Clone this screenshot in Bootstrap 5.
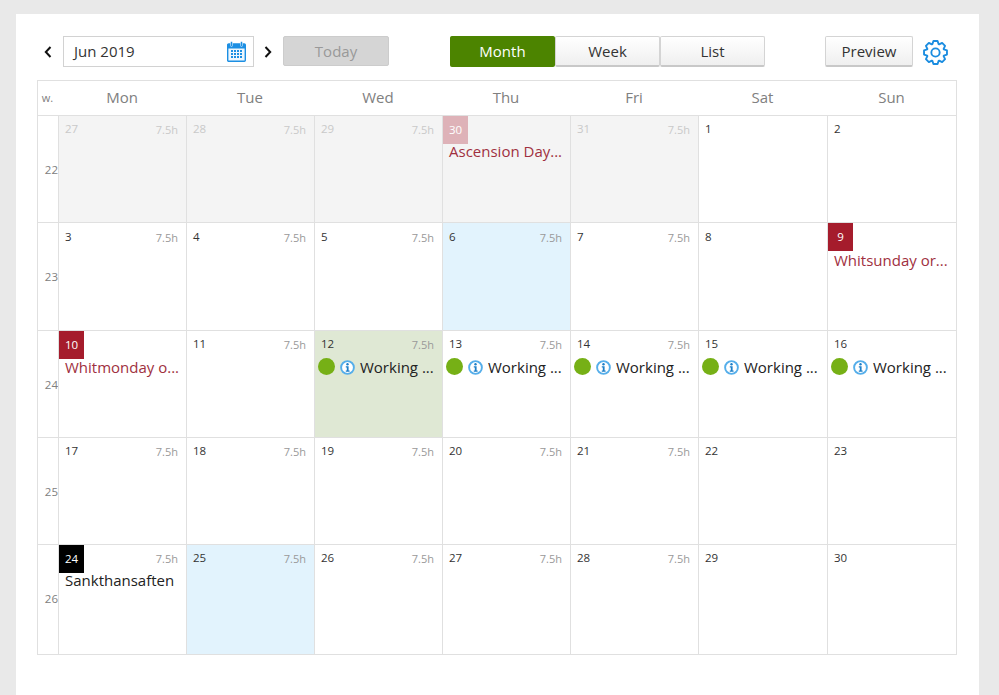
<!DOCTYPE html>
<html lang="en">
<head>
    <meta charset="UTF-8">
    <meta name="viewport" content="width=device-width, initial-scale=1.0">
    <title>Calendar</title>
    <link rel="stylesheet" href="https://cdn.jsdelivr.net/npm/bootstrap@5.3.0/dist/css/bootstrap.min.css">
    <style>
        body {
            font-family: "Open Sans", "Liberation Sans", sans-serif;
            background-color: #e9e9e9;
            color: #333;
            height: 695px;
            overflow: hidden;
        }

        .page-panel {
            background: #fff;
            margin: 14px 20px 0 16px;
            padding: 22px 22px 0 21px;
            height: 681px;
        }

        /* Toolbar */
        .tool-bar { height: 31px; margin-bottom: 13px; }

        .arrow-btn { width: 26px; height: 31px; }
        .arrow-prev { padding-right: 4px; }
        .arrow-next { padding-left: 2px; }

        .date-box {
            width: 191px;
            height: 31px;
            border: 1px solid #d2d2d2;
            padding: 0 7px 0 10px;
            font-size: 15px;
            color: #333;
        }

        .today-btn {
            width: 106px;
            height: 30px;
            margin-left: 3px;
            background: #d5d5d5;
            border: 1px solid #ccc;
            border-radius: 2px;
            color: #999;
            font-size: 15px;
            line-height: 28px;
            text-align: center;
        }

        .view-group { margin-left: 61px; }

        .view-btn {
            width: 105px;
            height: 31px;
            border: 1px solid #d4d4d4;
            border-bottom: 2px solid #c8c8c8;
            background: linear-gradient(#fff, #efefef);
            color: #333;
            font-size: 15px;
            line-height: 28px;
            text-align: center;
            border-radius: 2px;
            padding: 0;
        }

        .view-btn.is-active {
            background: #4c8400;
            border-color: #4c8400;
            color: #fff;
        }

        .preview-btn { width: 88px; margin-left: 60px; }

        .gear-icon { margin: 4px 0 0 10px; }

        /* Calendar grid */
        .cal-grid {
            display: grid;
            grid-template-columns: 20px repeat(5, 128px) 129px 129px;
            grid-template-rows: 35px 107px 108px 107px 107px 109px;
            border: 1px solid #e0e0e0;
            width: 920px;
        }

        .head-cell {
            font-size: 15px;
            color: #808080;
            text-align: center;
            line-height: 33px;
            border-bottom: 1px solid #e0e0e0;
        }

        .head-week { font-size: 11px; line-height: 34px; padding-right: 1px; }

        .week-cell {
            font-size: 11.5px;
            color: #808080;
            text-align: right;
            border-bottom: 1px solid #e0e0e0;
            padding-top: 45px;
        }

        .day-cell {
            border-left: 1px solid #e0e0e0;
            border-bottom: 1px solid #e0e0e0;
            min-width: 0;
            white-space: nowrap;
            overflow: hidden;
        }

        .day-cell.last-row, .week-cell.last-row { border-bottom: 0; }

        .day-head { height: 28px; padding: 5px 8px 0 6px; }

        .day-head.is-lower { padding-top: 6px; }

        .day-num { font-size: 11.5px; line-height: 16px; color: #333; }

        .day-hours { font-size: 11px; line-height: 18px; color: #999; }

        .day-head.has-badge { padding-left: 0; padding-top: 0; }

        .day-head.has-badge .day-hours { margin-top: 5px; }

        .day-badge {
            width: 25px;
            height: 28px;
            color: #fff;
            font-size: 11.5px;
            line-height: 28px;
            text-align: center;
        }

        .badge-red { background: #a51c2c; }
        .badge-black { background: #000; }
        .badge-pale { background: #deb2b8; }

        .day-event {
            font-size: 15px;
            line-height: 20px;
            padding-left: 6px;
            margin-top: -3px;
        }

        .day-event.is-lower { margin-top: -2px; }
        .day-event.is-lowest { margin-top: -1px; }

        .event-red { color: #a03040; }
        .event-black { color: #222; }

        .work-row { padding-left: 3px; margin-top: -2px; height: 20px; font-size: 15px; line-height: 20px; color: #222; }

        .work-dot {
            width: 17px;
            height: 17px;
            margin: 1px 5px 0 0;
            border-radius: 50%;
            background: #76b016;
            flex: none;
        }

        .work-info { margin: 3px 5px 0 0; flex: none; }

        .is-other { background: #f4f4f4; }
        .is-other .day-num, .is-other .day-hours { color: #c9c9c9; }
        .is-blue { background: #e2f3fd; }
        .is-green { background: #dfe8d4; }
    </style>
</head>
<body>
    <div class="page-panel">
        <!-- Toolbar -->
        <div class="tool-bar d-flex align-items-start">
            <div class="arrow-btn arrow-prev d-flex align-items-center justify-content-center">
                <svg width="8" height="12" viewBox="0 0 8 12"><path d="M6.5 1 L1.800 6 L6.500 11" fill="none" stroke="#111" stroke-width="2"/></svg>
            </div>
            <div class="date-box d-flex align-items-center justify-content-between">
                <span>Jun 2019</span>
                <svg width="19" height="21" viewBox="0 0 19 21">
                    <rect x="0.7" y="3" width="17.6" height="17.300" rx="1" fill="#eef7fd" stroke="#1c8fe3" stroke-width="1.400"/>
                    <rect x="0.7" y="3" width="17.6" height="4.500" fill="#1c8fe3"/>
                    <rect x="3.500" y="0.500" width="2" height="5" rx="1" fill="#1c8fe3" stroke="#fff" stroke-width="0.500"/>
                    <rect x="13.500" y="0.500" width="2" height="5" rx="1" fill="#1c8fe3" stroke="#fff" stroke-width="0.500"/>
                    <path d="M4 10h11M4 13h11M4 16h11" stroke="#1c8fe3" stroke-width="2" stroke-dasharray="2 1"/>
                </svg>
            </div>
            <div class="arrow-btn arrow-next d-flex align-items-center justify-content-center">
                <svg width="8" height="12" viewBox="0 0 8 12"><path d="M1.500 1 L6.200 6 L1.500 11" fill="none" stroke="#111" stroke-width="2"/></svg>
            </div>
            <div class="today-btn">Today</div>
            <div class="view-group d-flex">
                <button class="view-btn is-active">Month</button>
                <button class="view-btn">Week</button>
                <button class="view-btn">List</button>
            </div>
            <button class="view-btn preview-btn">Preview</button>
            <svg class="gear-icon" width="25" height="25" viewBox="0 0 24 24">
                <polygon points="9,4 10,1 14,1 15,4 15.54,4.220 18.360,2.810 21.190,5.640 19.780,8.460 20,9 23,10 23,14 20,15 19.780,15.540 21.190,18.360 18.360,21.190 15.540,19.780 15,20 14,23 10,23 9,20 8.460,19.780 5.640,21.190 2.810,18.360 4.220,15.540 4,15 1,14 1,10 4,9 4.220,8.460 2.810,5.640 5.640,2.810 8.460,4.220" fill="none" stroke="#1a8ce0" stroke-width="1.800" stroke-linejoin="round"/>
                <circle cx="12" cy="12" r="4" fill="none" stroke="#1a8ce0" stroke-width="1.800"/>
            </svg>
        </div>

        <!-- Calendar -->
        <div class="cal-grid">
            <div class="head-cell head-week">w.</div>
            <div class="head-cell">Mon</div>
            <div class="head-cell">Tue</div>
            <div class="head-cell">Wed</div>
            <div class="head-cell">Thu</div>
            <div class="head-cell">Fri</div>
            <div class="head-cell">Sat</div>
            <div class="head-cell">Sun</div>

            <!-- Week 22 -->
            <div class="week-cell">22</div>
            <div class="day-cell is-other"><div class="day-head d-flex justify-content-between"><span class="day-num">27</span><span class="day-hours">7.5h</span></div></div>
            <div class="day-cell is-other"><div class="day-head d-flex justify-content-between"><span class="day-num">28</span><span class="day-hours">7.5h</span></div></div>
            <div class="day-cell is-other"><div class="day-head d-flex justify-content-between"><span class="day-num">29</span><span class="day-hours">7.5h</span></div></div>
            <div class="day-cell is-other">
                <div class="day-head has-badge d-flex justify-content-between"><span class="day-badge badge-pale">30</span></div>
                <div class="day-event event-red">Ascension Day...</div>
            </div>
            <div class="day-cell is-other"><div class="day-head d-flex justify-content-between"><span class="day-num">31</span><span class="day-hours">7.5h</span></div></div>
            <div class="day-cell"><div class="day-head d-flex justify-content-between"><span class="day-num">1</span></div></div>
            <div class="day-cell"><div class="day-head d-flex justify-content-between"><span class="day-num">2</span></div></div>

            <!-- Week 23 -->
            <div class="week-cell">23</div>
            <div class="day-cell"><div class="day-head is-lower d-flex justify-content-between"><span class="day-num">3</span><span class="day-hours">7.5h</span></div></div>
            <div class="day-cell"><div class="day-head is-lower d-flex justify-content-between"><span class="day-num">4</span><span class="day-hours">7.5h</span></div></div>
            <div class="day-cell"><div class="day-head is-lower d-flex justify-content-between"><span class="day-num">5</span><span class="day-hours">7.5h</span></div></div>
            <div class="day-cell is-blue"><div class="day-head is-lower d-flex justify-content-between"><span class="day-num">6</span><span class="day-hours">7.5h</span></div></div>
            <div class="day-cell"><div class="day-head is-lower d-flex justify-content-between"><span class="day-num">7</span><span class="day-hours">7.5h</span></div></div>
            <div class="day-cell"><div class="day-head is-lower d-flex justify-content-between"><span class="day-num">8</span></div></div>
            <div class="day-cell">
                <div class="day-head has-badge d-flex justify-content-between"><span class="day-badge badge-red">9</span></div>
                <div class="day-event is-lowest event-red">Whitsunday or...</div>
            </div>

            <!-- Week 24 -->
            <div class="week-cell">24</div>
            <div class="day-cell">
                <div class="day-head has-badge d-flex justify-content-between"><span class="day-badge badge-red">10</span></div>
                <div class="day-event is-lower event-red">Whitmonday o...</div>
            </div>
            <div class="day-cell"><div class="day-head d-flex justify-content-between"><span class="day-num">11</span><span class="day-hours">7.5h</span></div></div>
            <div class="day-cell is-green">
                <div class="day-head d-flex justify-content-between"><span class="day-num">12</span><span class="day-hours">7.5h</span></div>
                <div class="work-row d-flex"><span class="work-dot"></span><svg class="work-info" width="15" height="15" viewBox="0 0 15 15"><circle cx="7.500" cy="7.500" r="6.400" fill="#fff" stroke="#55aeea" stroke-width="1.900"/><circle cx="7.500" cy="4.200" r="1.200" fill="#1d7fc8"/><path d="M5.800 6.300h2.800v4.300h1v1.100H5.800v-1.100h1V7.400h-1z" fill="#1d7fc8"/></svg><span>Working ...</span></div>
            </div>
            <div class="day-cell">
                <div class="day-head d-flex justify-content-between"><span class="day-num">13</span><span class="day-hours">7.5h</span></div>
                <div class="work-row d-flex"><span class="work-dot"></span><svg class="work-info" width="15" height="15" viewBox="0 0 15 15"><circle cx="7.500" cy="7.500" r="6.400" fill="#fff" stroke="#55aeea" stroke-width="1.900"/><circle cx="7.500" cy="4.200" r="1.200" fill="#1d7fc8"/><path d="M5.800 6.300h2.800v4.300h1v1.100H5.800v-1.100h1V7.400h-1z" fill="#1d7fc8"/></svg><span>Working ...</span></div>
            </div>
            <div class="day-cell">
                <div class="day-head d-flex justify-content-between"><span class="day-num">14</span><span class="day-hours">7.5h</span></div>
                <div class="work-row d-flex"><span class="work-dot"></span><svg class="work-info" width="15" height="15" viewBox="0 0 15 15"><circle cx="7.500" cy="7.500" r="6.400" fill="#fff" stroke="#55aeea" stroke-width="1.900"/><circle cx="7.500" cy="4.200" r="1.200" fill="#1d7fc8"/><path d="M5.800 6.300h2.800v4.300h1v1.100H5.800v-1.100h1V7.400h-1z" fill="#1d7fc8"/></svg><span>Working ...</span></div>
            </div>
            <div class="day-cell">
                <div class="day-head d-flex justify-content-between"><span class="day-num">15</span></div>
                <div class="work-row d-flex"><span class="work-dot"></span><svg class="work-info" width="15" height="15" viewBox="0 0 15 15"><circle cx="7.500" cy="7.500" r="6.400" fill="#fff" stroke="#55aeea" stroke-width="1.900"/><circle cx="7.500" cy="4.200" r="1.200" fill="#1d7fc8"/><path d="M5.800 6.300h2.800v4.300h1v1.100H5.800v-1.100h1V7.400h-1z" fill="#1d7fc8"/></svg><span>Working ...</span></div>
            </div>
            <div class="day-cell">
                <div class="day-head d-flex justify-content-between"><span class="day-num">16</span></div>
                <div class="work-row d-flex"><span class="work-dot"></span><svg class="work-info" width="15" height="15" viewBox="0 0 15 15"><circle cx="7.500" cy="7.500" r="6.400" fill="#fff" stroke="#55aeea" stroke-width="1.900"/><circle cx="7.500" cy="4.200" r="1.200" fill="#1d7fc8"/><path d="M5.800 6.300h2.800v4.300h1v1.100H5.800v-1.100h1V7.400h-1z" fill="#1d7fc8"/></svg><span>Working ...</span></div>
            </div>

            <!-- Week 25 -->
            <div class="week-cell">25</div>
            <div class="day-cell"><div class="day-head d-flex justify-content-between"><span class="day-num">17</span><span class="day-hours">7.5h</span></div></div>
            <div class="day-cell"><div class="day-head d-flex justify-content-between"><span class="day-num">18</span><span class="day-hours">7.5h</span></div></div>
            <div class="day-cell"><div class="day-head d-flex justify-content-between"><span class="day-num">19</span><span class="day-hours">7.5h</span></div></div>
            <div class="day-cell"><div class="day-head d-flex justify-content-between"><span class="day-num">20</span><span class="day-hours">7.5h</span></div></div>
            <div class="day-cell"><div class="day-head d-flex justify-content-between"><span class="day-num">21</span><span class="day-hours">7.5h</span></div></div>
            <div class="day-cell"><div class="day-head d-flex justify-content-between"><span class="day-num">22</span></div></div>
            <div class="day-cell"><div class="day-head d-flex justify-content-between"><span class="day-num">23</span></div></div>

            <!-- Week 26 -->
            <div class="week-cell last-row">26</div>
            <div class="day-cell last-row">
                <div class="day-head has-badge d-flex justify-content-between"><span class="day-badge badge-black">24</span><span class="day-hours">7.5h</span></div>
                <div class="day-event event-black">Sankthansaften</div>
            </div>
            <div class="day-cell last-row is-blue"><div class="day-head d-flex justify-content-between"><span class="day-num">25</span><span class="day-hours">7.5h</span></div></div>
            <div class="day-cell last-row"><div class="day-head d-flex justify-content-between"><span class="day-num">26</span><span class="day-hours">7.5h</span></div></div>
            <div class="day-cell last-row"><div class="day-head d-flex justify-content-between"><span class="day-num">27</span><span class="day-hours">7.5h</span></div></div>
            <div class="day-cell last-row"><div class="day-head d-flex justify-content-between"><span class="day-num">28</span><span class="day-hours">7.5h</span></div></div>
            <div class="day-cell last-row"><div class="day-head d-flex justify-content-between"><span class="day-num">29</span></div></div>
            <div class="day-cell last-row"><div class="day-head d-flex justify-content-between"><span class="day-num">30</span></div></div>
        </div>
    </div>

    <script src="https://cdn.jsdelivr.net/npm/bootstrap@5.3.0/dist/js/bootstrap.bundle.min.js"></script>
</body>
</html>
